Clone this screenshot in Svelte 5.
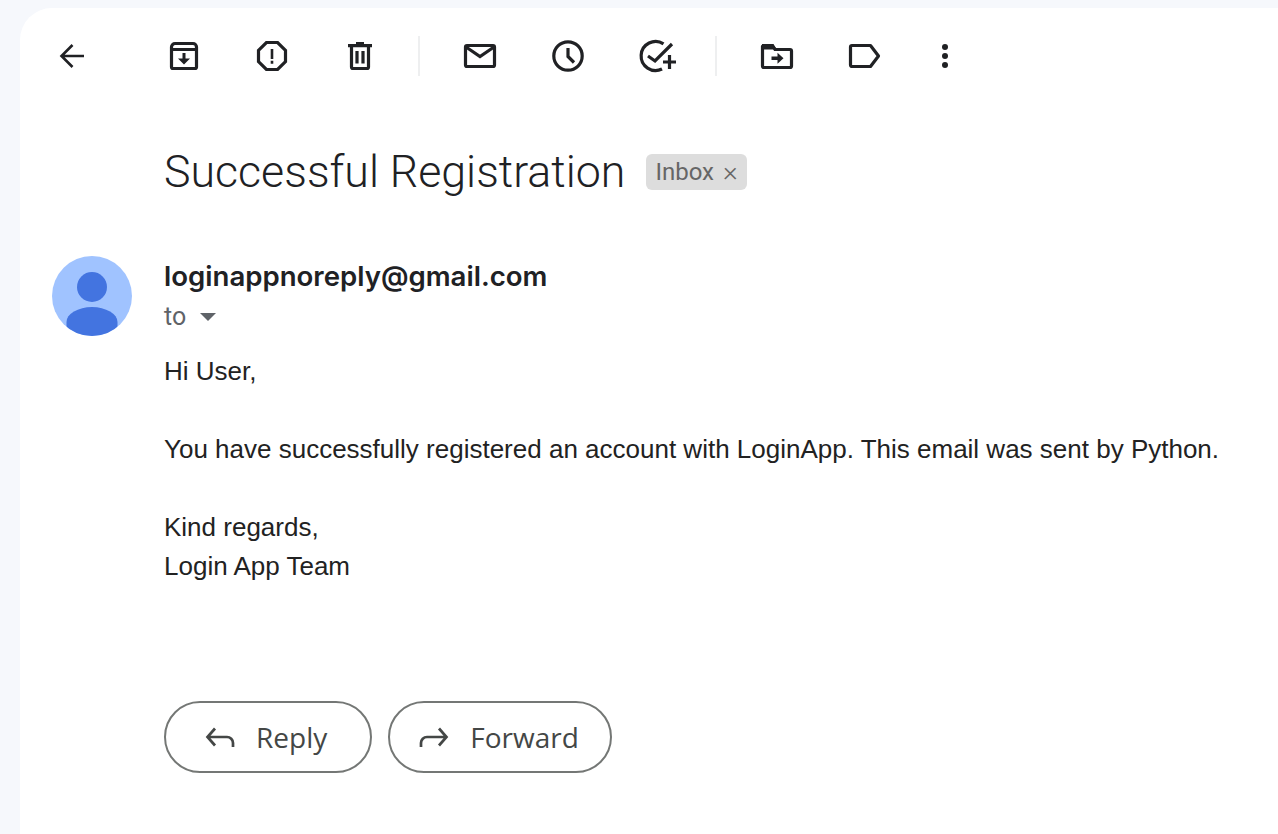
<script>
  const bodyLines = ['You have successfully registered an account with LoginApp. This email was sent by Python.'];
</script>

<div class="page">
  <main class="card">
    <div class="toolbar">
      <button class="tool back" aria-label="Back to Inbox">
        <svg viewBox="0 0 32 32"><path d="M28 16H6M16.500 5 5.500 16l11 11" /></svg>
      </button>
      <div class="group first">
        <button class="tool" aria-label="Archive">
          <svg viewBox="0 0 32 32">
            <path d="M3.500 9V27a1.500 1.500 0 0 0 1.500 1.500H27a1.500 1.500 0 0 0 1.500-1.500V9M3.500 9V7A3.500 3.500 0 0 1 7 3.500H25A3.500 3.500 0 0 1 28.500 7V9M3.500 9.500H28.500" />
            <path class="fill" d="M14.500 13h3v5.500H22L16 24.500 10 18.500h4.500z" />
          </svg>
        </button>
        <button class="tool" aria-label="Report spam">
          <svg viewBox="0 0 32 32">
            <path d="M10.400 2.500H21.600L29.500 10.400V21.600L21.600 29.500H10.400L2.500 21.600V10.400z" />
            <path class="fill" d="M14.700 9h2.600v10h-2.600zM14.700 20.800h2.600v3h-2.600z" />
          </svg>
        </button>
        <button class="tool" aria-label="Delete">
          <svg viewBox="0 0 32 32">
            <path d="M4 5.700H28M12 3.500H20M7.500 5.700V27a1.500 1.500 0 0 0 1.500 1.500H23a1.500 1.500 0 0 0 1.500-1.500V5.700M13 11V23.500M19 11V23.500" />
          </svg>
        </button>
      </div>
      <span class="divider"></span>
      <div class="group">
        <button class="tool" aria-label="Mark as unread">
          <svg viewBox="0 0 32 32">
            <rect x="1.500" y="5.500" width="29" height="21" rx="1.500" />
            <path d="M2 7 16 16.500 30 7" />
          </svg>
        </button>
        <button class="tool" aria-label="Snooze">
          <svg viewBox="0 0 32 32">
            <circle cx="16" cy="16" r="14.200" />
            <path d="M16 8V16.500L22 22.500" />
          </svg>
        </button>
        <button class="tool" aria-label="Add to Tasks">
          <svg viewBox="0 0 32 32">
            <path d="M23.500 3.800A14.500 14.500 0 1 0 22 29" />
            <path d="M8 16 15 21 32 4" />
            <path d="M29.500 15V29M23 22H36" />
          </svg>
        </button>
      </div>
      <span class="divider second"></span>
      <div class="group">
        <button class="tool" aria-label="Move to">
          <svg viewBox="0 0 32 32">
            <path d="M1.500 6.300V26a1.500 1.500 0 0 0 1.500 1.500H29a1.500 1.500 0 0 0 1.500-1.500V11A1.500 1.500 0 0 0 29 9.500H14L11.500 5.500H2.300z" />
            <path class="fill" d="M1 4H12L16 9.500H1z" />
            <path class="fill" d="M10.500 16.500H16.500V12.800L22.500 18.300 16.500 23.800V20.100H10.500z" />
          </svg>
        </button>
        <button class="tool" aria-label="Labels">
          <svg viewBox="0 0 32 32">
            <path class="round" d="M3 5.500H21.500L29.500 16 21.500 26.500H3A1.500 1.500 0 0 1 1.500 25V7A1.500 1.500 0 0 1 3 5.500z" />
          </svg>
        </button>
        <button class="tool more" aria-label="More">
          <svg viewBox="0 0 32 32">
            <circle class="fill" cx="16" cy="7" r="3" />
            <circle class="fill" cx="16" cy="16" r="3" />
            <circle class="fill" cx="16" cy="25" r="3" />
          </svg>
        </button>
      </div>
    </div>

    <div class="subject">
      <h1>Successful Registration</h1>
      <span class="chip">Inbox <span class="chip-x">×</span></span>
    </div>

    <article class="message">
      <svg class="avatar" viewBox="0 0 80 80" aria-hidden="true">
        <circle cx="40" cy="40" r="40" fill="#a0c3ff" />
        <clipPath id="av"><circle cx="40" cy="40" r="40" /></clipPath>
        <g clip-path="url(#av)" fill="#4374e0">
          <circle cx="40" cy="31" r="15" />
          <path d="M14.500 66A25.500 15 0 0 1 65.500 66V80H14.500z" />
        </g>
      </svg>
      <div class="content">
        <div class="sender">loginappnoreply@gmail.com</div>
        <div class="to">to <span class="caret"></span></div>
        <div class="body">
          <p>Hi User,</p>
          {#each bodyLines as line}
            <p>{line}</p>
          {/each}
          <p>Kind regards,<br />Login App Team</p>
        </div>
        <div class="actions">
          <button class="action reply">
            <svg viewBox="0 0 32 32"><path d="M11 7.500 3.500 16 11 24.500M4 16H23A6 6 0 0 1 29 22V26" /></svg>
            Reply
          </button>
          <button class="action forward">
            <svg viewBox="0 0 32 32"><path d="M21 7.500 28.500 16 21 24.500M28 16H9A6 6 0 0 0 3 22V26" /></svg>
            Forward
          </button>
        </div>
      </div>
    </article>
  </main>
</div>

<style>
  :global(body) {
    margin: 0;
    background: #f6f8fc;
  }

  .page {
    height: 834px;
    overflow: hidden;
    padding: 8px 0 0 20px;
    box-sizing: border-box;
  }

  .card {
    background: #fff;
    border-radius: 32px 0 0 0;
    height: 826px;
    font-family: "Roboto", "Liberation Sans", sans-serif;
    color: #202124;
  }

  .toolbar {
    display: flex;
    align-items: center;
    height: 96px;
    padding-left: 36px;
  }

  .group {
    display: flex;
    align-items: center;
    gap: 56px;
  }

  .group.first {
    margin-left: 80px;
  }

  .tool {
    width: 32px;
    height: 32px;
    padding: 0;
    border: 0;
    background: none;
    display: block;
  }

  .tool svg {
    display: block;
    width: 32px;
    height: 32px;
    overflow: visible;
    fill: none;
    stroke: #202124;
    stroke-width: 3.2;
  }

  .tool svg .fill {
    fill: #202124;
    stroke: none;
  }

  .tool svg .round {
    stroke-linejoin: round;
  }

  .tool.back svg {
    stroke-width: 2.6;
  }

  .tool.more {
    margin-left: -8px;
  }

  .divider {
    width: 2px;
    height: 40px;
    background: #eeeff0;
    margin: 0 44px 0 42px;
  }

  .divider.second {
    margin: 0 44px 0 43px;
  }

  .subject {
    display: flex;
    align-items: center;
    margin: 40px 0 0 144px;
    height: 56px;
  }

  h1 {
    margin: 0;
    font-size: 44.700px;
    font-weight: 300;
  }

  .chip {
    margin-left: 21px;
    background: #dddddd;
    color: #666;
    border-radius: 6px;
    height: 36px;
    line-height: 36px;
    padding: 0 9px;
    font-size: 24px;
    display: flex;
    align-items: center;
    gap: 9px;
  }

  .chip-x {
    font-size: 28px;
    font-weight: 300;
    line-height: 36px;
  }

  .message {
    display: flex;
    margin: 24px 0 0 32px;
    gap: 32px;
  }

  .avatar {
    width: 80px;
    height: 80px;
    flex: none;
    margin-top: 32px;
  }

  .sender {
    font-family: "Inter", sans-serif;
    font-size: 27.600px;
    font-weight: 600;
    line-height: 40px;
    margin-top: 32px;
  }

  .to {
    display: flex;
    align-items: center;
    gap: 14px;
    color: #5f6368;
    font-size: 25px;
    line-height: 40px;
    padding-top: 1px;
  }

  .caret {
    width: 0;
    height: 0;
    border: 8px solid transparent;
    border-top: 8px solid #5f6368;
    border-bottom: 0;
  }

  .body {
    margin-top: 15px;
    font-family: "Liberation Sans", Arial, sans-serif;
    font-size: 26px;
    line-height: 39px;
    color: #222;
  }

  .body p {
    margin: 0 0 39px;
  }

  .actions {
    display: flex;
    gap: 16px;
    margin-top: 115px;
  }

  .action {
    display: flex;
    align-items: center;
    gap: 20px;
    height: 72px;
    padding: 0 43px 0 38px;
    background: #fff;
    border: 2px solid #747775;
    border-radius: 36px;
    font-family: "Open Sans", sans-serif;
    font-size: 28px;
    color: #444746;
    box-sizing: border-box;
  }

  .action.forward {
    padding: 0 31px 0 28px;
  }

  .action svg {
    width: 32px;
    height: 32px;
    fill: none;
    stroke: #444746;
    stroke-width: 2.7;
  }
</style>
